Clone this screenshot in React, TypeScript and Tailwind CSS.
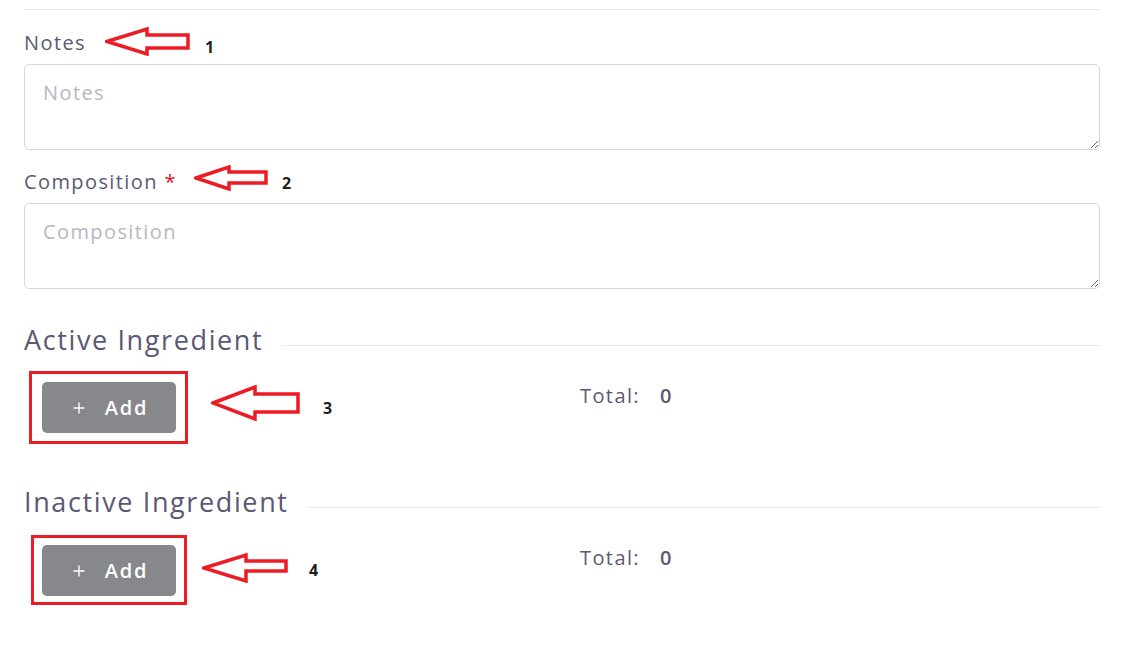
import React from "react";

const FONT = { fontFamily: '"Open Sans", "DejaVu Sans", sans-serif' };

function Arrow({ w, h, hb, st, sb }: { w: number; h: number; hb: number; st: number; sb: number }) {
  const p = 2;
  const pts = [
    [0, h / 2],
    [hb, 0],
    [hb, st],
    [w, st],
    [w, sb],
    [hb, sb],
    [hb, h],
  ]
    .map(([x, y]) => `${x + p},${y + p}`)
    .join(" ");
  return (
    <svg width={w + p * 2} height={h + p * 2} viewBox={`0 0 ${w + p * 2} ${h + p * 2}`} className="block shrink-0">
      <polygon points={pts} fill="white" stroke="#ec1c24" strokeWidth={3.5} strokeLinejoin="miter" />
    </svg>
  );
}

function Num({ n }: { n: string }) {
  return (
    <span className="text-[16px] font-bold text-[#1e1e1e] leading-none" style={{ fontFamily: '"Open Sans", sans-serif' }}>
      {n}
    </span>
  );
}

function Plus() {
  return (
    <svg width="14" height="14" viewBox="0 0 14 14" className="block">
      <path d="M7 1.5v11M1.5 7h11" stroke="white" strokeWidth="1.4" />
    </svg>
  );
}

function AddButton() {
  return (
    <button className="w-[134px] h-[51px] bg-[#86888c] rounded-[5px] flex items-center justify-center text-white">
      <span className="mr-[19px] ml-[2px]">
        <Plus />
      </span>
      <span className="text-[20px] font-semibold leading-none tracking-[0.09em]">Add</span>
    </button>
  );
}

export default function App() {
  return (
    <div className="w-[1126px] h-[650px] bg-white overflow-hidden" style={FONT}>
      <div className="ml-[24px] w-[1076px]">
        <div className="mt-[9px] h-px bg-[#e4e4ea]" />

        {/* Notes */}
        <div className="mt-[19px] h-[28px] flex items-center">
          <span className="w-[81px] text-[20px] leading-[28px] text-[#5b5973] tracking-[0.07em]">Notes</span>
          <div className="mt-[-4px]">
            <Arrow w={81} h={25} hb={40} st={6} sb={19} />
          </div>
          <span className="ml-[15px] mt-[8px]">
            <Num n="1" />
          </span>
        </div>
        <textarea
          placeholder="Notes"
          className="mt-[7px] block w-full h-[86px] border border-[#d6d6dc] rounded-[5px] px-[18px] py-[14px] text-[20px] leading-[28px] text-[#5b5973] placeholder:text-[#b7b7c1] tracking-[0.07em] outline-none"
        />

        {/* Composition */}
        <div className="mt-[18px] h-[28px] flex items-center">
          <span className="w-[170px] text-[20px] leading-[28px] text-[#5b5973] tracking-[0.07em] whitespace-nowrap">
            Composition <span className="text-[#e0141e]">*</span>
          </span>
          <div className="mt-[-8px]">
            <Arrow w={70} h={22} hb={33} st={5} sb={16} />
          </div>
          <span className="ml-[14px] mt-[2px]">
            <Num n="2" />
          </span>
        </div>
        <textarea
          placeholder="Composition"
          className="mt-[7px] block w-full h-[86px] border border-[#d6d6dc] rounded-[5px] px-[18px] py-[14px] text-[20px] leading-[28px] text-[#5b5973] placeholder:text-[#b7b7c1] tracking-[0.07em] outline-none"
        />

        {/* Active Ingredient */}
        <div className="mt-[33px] h-[36px] flex items-center">
          <h2 className="text-[27px] leading-[36px] text-[#5b5973] tracking-[0.06em] font-normal whitespace-nowrap">
            Active Ingredient
          </h2>
          <div className="ml-[19px] flex-1 h-px bg-[#e7e7ec] mt-[10px]" />
        </div>
        <div className="mt-[13px] flex items-start">
          <div className="w-[556px] flex items-center">
            <div className="ml-[5px] border-[3px] border-[#ec1c24] pl-[10px] pr-[9px] pt-[8px] pb-[8px]">
              <AddButton />
            </div>
            <div className="ml-[23px] mt-[-10px]">
              <Arrow w={85} h={32} hb={42} st={7} sb={25} />
            </div>
            <span className="ml-[23px]">
              <Num n="3" />
            </span>
          </div>
          <div className="mt-[11px] flex items-center text-[20px] leading-[28px] text-[#5b5973] tracking-[0.07em]">
            <span className="w-[80px]">Total:</span>
            <span className="font-semibold">0</span>
          </div>
        </div>

        {/* Inactive Ingredient */}
        <div className="mt-[40px] h-[36px] flex items-center">
          <h2 className="text-[27px] leading-[36px] text-[#5b5973] tracking-[0.06em] font-normal whitespace-nowrap">
            Inactive Ingredient
          </h2>
          <div className="ml-[19px] flex-1 h-px bg-[#e7e7ec] mt-[10px]" />
        </div>
        <div className="mt-[15px] flex items-start">
          <div className="w-[556px] flex items-center">
            <div className="ml-[7px] border-[3px] border-[#ec1c24] pl-[8px] pr-[8px] pt-[7px] pb-[6px]">
              <AddButton />
            </div>
            <div className="ml-[15px] mt-[-5px]">
              <Arrow w={82} h={26} hb={42} st={6} sb={16} />
            </div>
            <span className="ml-[21px]">
              <Num n="4" />
            </span>
          </div>
          <div className="mt-[9px] flex items-center text-[20px] leading-[28px] text-[#5b5973] tracking-[0.07em]">
            <span className="w-[80px]">Total:</span>
            <span className="font-semibold">0</span>
          </div>
        </div>
      </div>
    </div>
  );
}
